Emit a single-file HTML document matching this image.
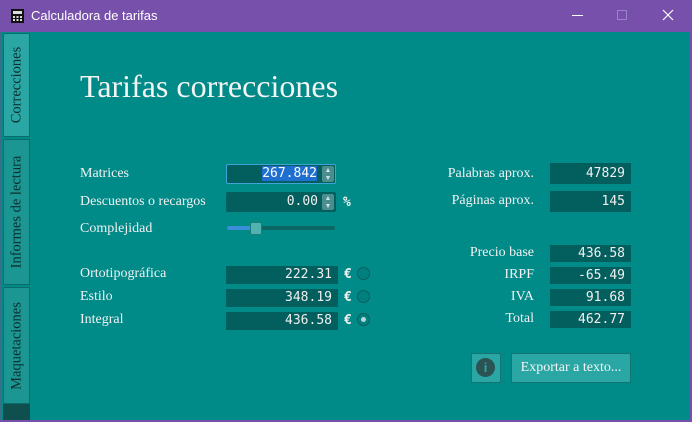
<!DOCTYPE html>
<html><head><meta charset="utf-8"><style>
*{margin:0;padding:0;box-sizing:border-box}
body{width:692px;height:422px;overflow:hidden;background:#7650ab;position:relative;font-family:"Liberation Serif",serif;color:#fff}
.a{position:absolute}
.title{left:0;top:0;width:692px;height:32px;background:#7650ab}
.main{left:0;top:32px;width:690px;height:388px;background:#008a88;border-left:1px solid #3a6f8a}
.lbl{position:absolute;font-size:14px;color:#f2f2f2;white-space:nowrap}
.r{text-align:right}
.f{position:absolute;background:#035f5e;font-family:"DejaVu Sans Mono","Liberation Mono",monospace;font-size:13px;color:#f0f0f0;text-align:right;padding-right:6px}
.tab{position:absolute;left:3px;width:27px;border:1px solid #0b6d6b;border-radius:2px 0 0 2px}
.tab span{position:absolute;left:50%;top:50%;transform:translate(-50%,-50%) rotate(-90deg);font-size:14.5px;color:#0c2e2e;white-space:nowrap}
.rad{position:absolute;width:13px;height:13px;border-radius:50%;border:1px solid #0b5e5d;background:#00817f}
.eu{position:absolute;font-family:"DejaVu Sans Mono",monospace;font-size:13px;font-weight:bold;color:#f0f0f0}
.sp{position:absolute;width:12px;height:16px;background:#4a8f8e;border-radius:2px;color:#cde;font-size:7px;line-height:8px;text-align:center}
</style></head><body>
<div class="a title">
 <svg class="a" style="left:11px;top:9px" width="13" height="14" viewBox="0 0 13 14"><rect x="0.5" y="0.5" width="12" height="13" fill="#111" stroke="#111"/><rect x="2" y="2" width="9" height="3" fill="#ddd"/><g fill="#ddd"><rect x="2" y="7" width="2" height="2"/><rect x="5.5" y="7" width="2" height="2"/><rect x="9" y="7" width="2" height="2"/><rect x="2" y="10" width="2" height="2"/><rect x="5.5" y="10" width="2" height="2"/><rect x="9" y="10" width="2" height="2"/></g></svg>
 <div class="a" style="left:31px;top:8px;font-family:'Liberation Sans',sans-serif;font-size:13px;color:#fff">Calculadora de tarifas</div>
 <div class="a" style="left:572px;top:15px;width:11px;height:1px;background:#fff"></div>
 <div class="a" style="left:617px;top:10px;width:10px;height:10px;border:1px solid #9a83c8"></div>
 <svg class="a" style="left:662px;top:9px" width="12" height="12"><path d="M1 1L11 11M11 1L1 11" stroke="#fff" stroke-width="1.2"/></svg>
</div>
<div class="a main"></div>
<div class="tab" style="top:33px;height:104px;background:#2aa7a4"><span>Correcciones</span></div>
<div class="tab" style="top:139px;height:146px;background:#1c9693"><span>Informes de lectura</span></div>
<div class="tab" style="top:287px;height:117px;background:#1c9693"><span>Maquetaciones</span></div>
<div class="a" style="left:3px;top:404px;width:27px;height:16px;background:#0f504f"></div>

<div class="a" style="left:80px;top:68px;font-size:32px;color:#f4f4f4">Tarifas correcciones</div>

<div class="lbl" style="left:80px;top:166px">Matrices</div>
<div class="lbl" style="left:80px;top:194px">Descuentos o recargos</div>
<div class="lbl" style="left:80px;top:221px">Complejidad</div>
<div class="lbl" style="left:80px;top:266px">Ortotipográfica</div>
<div class="lbl" style="left:80px;top:289px">Estilo</div>
<div class="lbl" style="left:80px;top:312px">Integral</div>

<div class="f" style="left:226px;top:164px;width:110px;height:20px;line-height:18px;border:1px solid #3fa3d8;border-radius:2px;padding-right:18px"><span style="background:#1f6fd0;color:#fff">267.842</span></div>
<div class="sp" style="left:322px;top:166px">▲<br>▼</div>
<div class="f" style="left:226px;top:192px;width:110px;height:20px;line-height:20px;border-radius:2px;padding-right:18px">0.00</div>
<div class="sp" style="left:322px;top:194px">▲<br>▼</div>
<div class="eu" style="left:343px;top:195px">%</div>

<div class="a" style="left:227px;top:226px;width:108px;height:4px;background:#0b6664;border-radius:2px"></div>
<div class="a" style="left:227px;top:226px;width:30px;height:4px;background:#3a8fd8;border-radius:2px"></div>
<div class="a" style="left:250px;top:222px;width:12px;height:13px;background:#4fb3b0;border:1px solid #1f7b79;border-radius:2px"></div>

<div class="f" style="left:226px;top:266px;width:112px;height:18px;line-height:18px">222.31</div>
<div class="f" style="left:226px;top:289px;width:112px;height:18px;line-height:18px">348.19</div>
<div class="f" style="left:226px;top:312px;width:112px;height:18px;line-height:18px">436.58</div>
<div class="eu" style="left:344px;top:267px">€</div>
<div class="eu" style="left:344px;top:290px">€</div>
<div class="eu" style="left:344px;top:313px">€</div>
<div class="rad" style="left:357px;top:267px"></div>
<div class="rad" style="left:357px;top:290px"></div>
<div class="rad" style="left:357px;top:313px"></div>
<div class="a" style="left:361px;top:317px;width:5px;height:5px;border-radius:50%;background:#b8d8d6"></div>

<div class="lbl r" style="left:400px;width:134px;top:166px">Palabras aprox.</div>
<div class="lbl r" style="left:400px;width:134px;top:193px">Páginas aprox.</div>
<div class="lbl r" style="left:400px;width:134px;top:245px">Precio base</div>
<div class="lbl r" style="left:400px;width:134px;top:267px">IRPF</div>
<div class="lbl r" style="left:400px;width:134px;top:289px">IVA</div>
<div class="lbl r" style="left:400px;width:134px;top:311px">Total</div>
<div class="f" style="left:550px;top:163px;width:81px;height:21px;line-height:21px">47829</div>
<div class="f" style="left:550px;top:191px;width:81px;height:21px;line-height:21px">145</div>
<div class="f" style="left:550px;top:245px;width:81px;height:17px;line-height:17px">436.58</div>
<div class="f" style="left:550px;top:267px;width:81px;height:17px;line-height:17px">-65.49</div>
<div class="f" style="left:550px;top:289px;width:81px;height:17px;line-height:17px">91.68</div>
<div class="f" style="left:550px;top:311px;width:81px;height:17px;line-height:17px">462.77</div>

<div class="a" style="left:471px;top:353px;width:30px;height:30px;background:#2aa7a4;border:1px solid #137472;border-radius:2px"></div>
<div class="a" style="left:476px;top:358px;width:19px;height:19px;border-radius:50%;background:#2b5354;color:#2aa7a4;font-family:'Liberation Sans',sans-serif;font-weight:bold;font-size:13px;text-align:center;line-height:19px">i</div>
<div class="a" style="left:511px;top:353px;width:120px;height:30px;background:#2aa7a4;border:1px solid #137472;border-radius:2px;font-size:14px;color:#f4f4f4;text-align:center;line-height:28px">Exportar a texto...</div>
</body></html>
